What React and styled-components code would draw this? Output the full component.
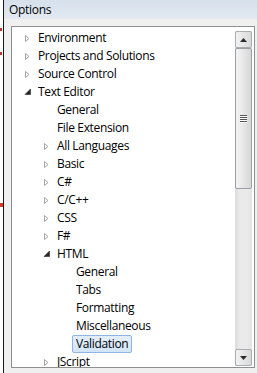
import React from "react";
import styled, { createGlobalStyle } from "styled-components";

const Global = createGlobalStyle`
  html, body { margin: 0; padding: 0; }
  body {
    width: 257px; height: 373px; overflow: hidden;
    background: #f0f0f0;
    font-family: "Open Sans", "Noto Sans", sans-serif;
  }
`;

const Screen = styled.div`
  display: flex;
  width: 257px;
  height: 373px;
  overflow: hidden;
`;

const LeftStrip = styled.div`
  width: 3px;
  flex: none;
  background:
    linear-gradient(#c0392b, #c0392b) 0 28px / 2px 3px no-repeat,
    linear-gradient(#c0392b, #c0392b) 0 52px / 2px 3px no-repeat,
    linear-gradient(#d23a2a, #d23a2a) 0 203px / 3px 4px no-repeat,
    #ffffff;
`;

const Edge = styled.div`
  width: 1px;
  flex: none;
  background: #1a1a1a;
`;

const Window = styled.div`
  flex: 1;
  display: flex;
  flex-direction: column;
  min-width: 0;
`;

const TitleBar = styled.div`
  height: 19px;
  flex: none;
  padding-left: 5px;
  display: flex;
  align-items: center;
  font-size: 12px;
  letter-spacing: -0.3px;
  color: #000;
  background: linear-gradient(#d6e0eb, #e2e9f1);
`;

const Body = styled.div`
  flex: 1;
  padding: 7px 2px 5px 7px;
  display: flex;
  min-height: 0;
`;

const TreeBox = styled.div`
  flex: 1;
  border: 1px solid #8e8f8f;
  background: #fff;
  display: flex;
  overflow: hidden;
  min-height: 0;
`;

const List = styled.div`
  flex: 1;
  padding-top: 2px;
  overflow: hidden;
  min-width: 0;
`;

const Row = styled.div`
  height: 18px;
  display: flex;
  align-items: center;
  padding-left: ${p => 12 + p.$level * 19}px;
  white-space: nowrap;
`;

const ArrowBox = styled.span`
  width: 10px;
  height: 18px;
  flex: none;
  display: flex;
  align-items: center;
`;

const Label = styled.span`
  font-size: 12px;
  line-height: 16px;
  letter-spacing: -0.35px;
  color: #000;
  padding: 0 3px;
  border: 1px solid ${p => (p.$selected ? "#8fb4e2" : "transparent")};
  border-radius: 2px;
  background: ${p => (p.$selected ? "linear-gradient(#e3eefb, #d3e5fa)" : "transparent")};
`;

const Scrollbar = styled.div`
  width: 17px;
  flex: none;
  margin: 4px 2px 1px 0;
  display: flex;
  flex-direction: column;
  background: linear-gradient(90deg, #dcdcdc, #eaeaea 30%, #eaeaea 70%, #e2e2e2);
`;

const SButton = styled.div`
  height: 17px;
  flex: none;
  box-sizing: border-box;
  border: 1px solid #a9acb0;
  border-radius: 2px;
  background: linear-gradient(90deg, #f3f3f3, #e6e6e6 50%, #d9d9d9);
  display: flex;
  align-items: center;
  justify-content: center;
`;

const Track = styled.div`
  flex: 1;
  display: flex;
  flex-direction: column;
`;

const Thumb = styled.div`
  height: 141px;
  box-sizing: border-box;
  border: 1px solid #9b9ea2;
  border-radius: 2px;
  background: linear-gradient(90deg, #f4f4f4, #e8e8e8 45%, #d6d6d6);
  display: flex;
  align-items: center;
  justify-content: center;
`;

const Grip = styled.div`
  width: 7px;
  display: flex;
  flex-direction: column;
  gap: 1px;
  & > span { height: 1px; background: #555; box-shadow: 0 1px 0 #fff; }
`;

const Collapsed = () => (
  <svg width="6" height="9" viewBox="0 0 6 9">
    <path d="M1.5 1.5 L5 4.5 L1.5 7.5 Z" fill="#fff" stroke="#a6a6a6" strokeWidth="1" />
  </svg>
);

const Expanded = () => (
  <svg width="7" height="8" viewBox="0 0 7 8">
    <path d="M6.5 1 L6.5 6.5 L1 6.5 Z" fill="#262626" stroke="#262626" strokeWidth="0.6" />
  </svg>
);

const items = [
  ["Environment", 0, "c"],
  ["Projects and Solutions", 0, "c"],
  ["Source Control", 0, "c"],
  ["Text Editor", 0, "e"],
  ["General", 1, ""],
  ["File Extension", 1, ""],
  ["All Languages", 1, "c"],
  ["Basic", 1, "c"],
  ["C#", 1, "c"],
  ["C/C++", 1, "c"],
  ["CSS", 1, "c"],
  ["F#", 1, "c"],
  ["HTML", 1, "e"],
  ["General", 2, ""],
  ["Tabs", 2, ""],
  ["Formatting", 2, ""],
  ["Miscellaneous", 2, ""],
  ["Validation", 2, "", true],
  ["JScript", 1, "c"],
];

export default function App() {
  return (
    <Screen>
      <Global />
      <LeftStrip />
      <Edge />
      <Window>
        <TitleBar>Options</TitleBar>
        <Body>
          <TreeBox>
            <List>
              {items.map(([text, level, kind, sel], i) => (
                <Row key={i} $level={level}>
                  <ArrowBox>
                    {kind === "c" && <Collapsed />}
                    {kind === "e" && <Expanded />}
                  </ArrowBox>
                  <Label $selected={!!sel}>{text}</Label>
                </Row>
              ))}
            </List>
            <Scrollbar>
              <SButton>
                <svg width="7" height="4" viewBox="0 0 7 4"><path d="M0 4 L3.5 0 L7 4 Z" fill="#2b2b2b" /></svg>
              </SButton>
              <Track>
                <Thumb>
                  <Grip><span /><span /><span /><span /></Grip>
                </Thumb>
              </Track>
              <SButton>
                <svg width="7" height="4" viewBox="0 0 7 4"><path d="M0 0 L7 0 L3.5 4 Z" fill="#2b2b2b" /></svg>
              </SButton>
            </Scrollbar>
          </TreeBox>
        </Body>
      </Window>
    </Screen>
  );
}
